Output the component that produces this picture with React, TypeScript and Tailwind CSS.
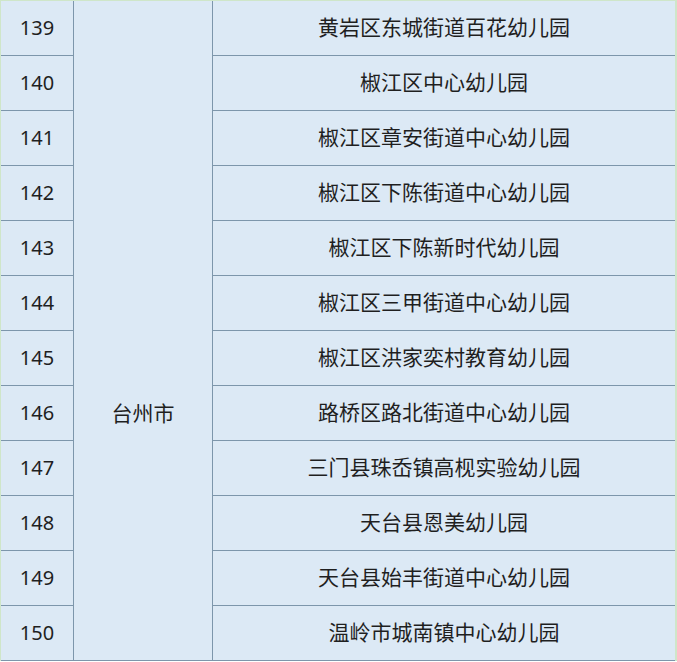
const rows: [number, string][] = [
  [139, "黄岩区东城街道百花幼儿园"],
  [140, "椒江区中心幼儿园"],
  [141, "椒江区章安街道中心幼儿园"],
  [142, "椒江区下陈街道中心幼儿园"],
  [143, "椒江区下陈新时代幼儿园"],
  [144, "椒江区三甲街道中心幼儿园"],
  [145, "椒江区洪家奕村教育幼儿园"],
  [146, "路桥区路北街道中心幼儿园"],
  [147, "三门县珠岙镇高枧实验幼儿园"],
  [148, "天台县恩美幼儿园"],
  [149, "天台县始丰街道中心幼儿园"],
  [150, "温岭市城南镇中心幼儿园"],
];

export default function App() {
  return (
    <div className="w-[677px] h-[662px] bg-white">
      <div
        className="grid grid-cols-[73px_138px_1fr] bg-[#dce9f5] border-t border-l border-r-2 border-[#cfe6c9] text-[#1f1f1f]"
        style={{ fontFamily: '"Noto Sans", "Noto Sans CJK SC", sans-serif' }}
      >
        {rows.map(([num, name], i) => (
          <div key={num} className="contents">
            <div className="h-[55px] flex items-center justify-center border-r border-b border-[#7d96ab] text-[20px]">
              {num}
            </div>
            {i === 0 && (
              <div className="row-span-12 flex items-start justify-center pt-[397px] border-b border-[#7d96ab] text-[21px] leading-[30px]">
                台州市
              </div>
            )}
            <div className="h-[55px] flex items-center justify-center border-l border-b border-[#7d96ab] text-[21px]">
              {name}
            </div>
          </div>
        ))}
      </div>
    </div>
  );
}
